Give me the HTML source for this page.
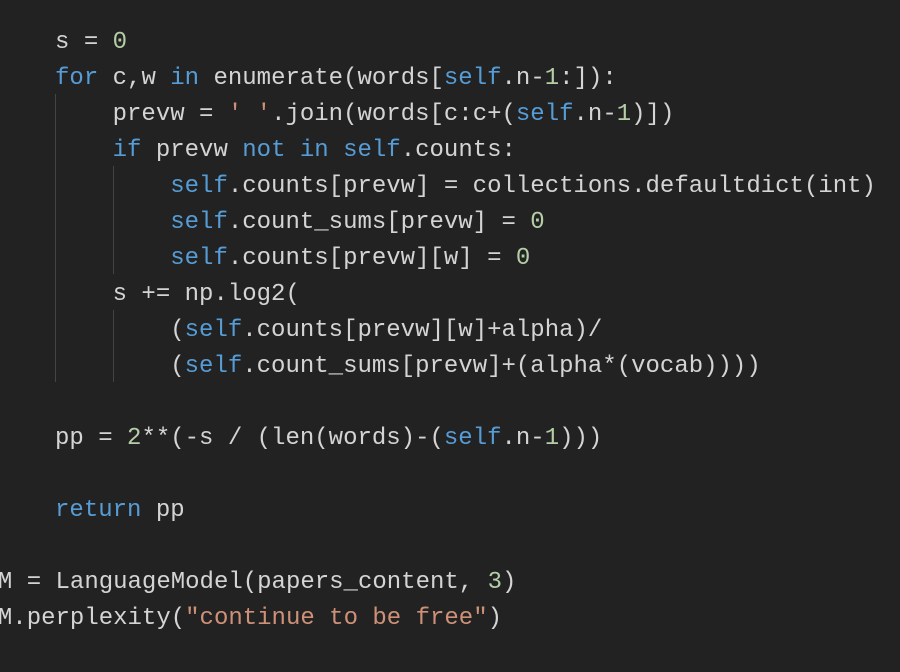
<!DOCTYPE html>
<html><head><style>
html,body{margin:0;padding:0;background:#222222;width:900px;height:672px;overflow:hidden}
pre{position:absolute;left:-2.6px;top:25px;margin:0;font-family:"Liberation Mono",monospace;font-size:24px;line-height:36px;color:#d4d4d4}
.k{color:#569cd6}.n{color:#b5cea8}.s{color:#ce9178}
.g{position:absolute;width:1px;background:#444}
</style></head><body>
<div class="g" style="left:55px;top:94px;height:288px"></div>
<div class="g" style="left:113px;top:166px;height:108px"></div>
<div class="g" style="left:113px;top:310px;height:72px"></div>
<pre>    s = <span class="n">0</span>
    <span class="k">for</span> c,w <span class="k">in</span> enumerate(words[<span class="k">self</span>.n-<span class="n">1</span>:]):
        prevw = <span class="s">' '</span>.join(words[c:c+(<span class="k">self</span>.n-<span class="n">1</span>)])
        <span class="k">if</span> prevw <span class="k">not in</span> <span class="k">self</span>.counts:
            <span class="k">self</span>.counts[prevw] = collections.defaultdict(int)
            <span class="k">self</span>.count_sums[prevw] = <span class="n">0</span>
            <span class="k">self</span>.counts[prevw][w] = <span class="n">0</span>
        s += np.log2(
            (<span class="k">self</span>.counts[prevw][w]+alpha)/
            (<span class="k">self</span>.count_sums[prevw]+(alpha*(vocab))))

    pp = <span class="n">2</span>**(-s / (len(words)-(<span class="k">self</span>.n-<span class="n">1</span>)))

    <span class="k">return</span> pp
</pre>
<pre style="left:-16.5px;top:565px">LM = LanguageModel(papers_content, <span class="n">3</span>)
LM.perplexity(<span class="s">"continue to be free"</span>)
</pre>
</body></html>
